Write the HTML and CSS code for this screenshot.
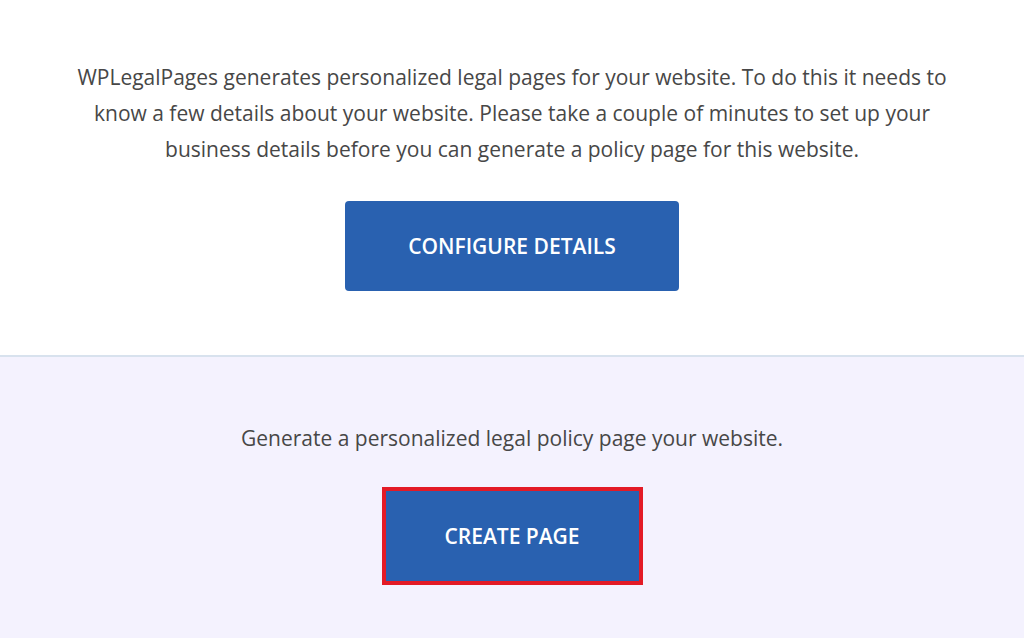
FILE: index.html
```html
<!DOCTYPE html>
<html lang="en">
<head>
	<meta charset="UTF-8">
	<title>WPLegalPages</title>
<link rel="stylesheet" href="styles.css">
</head>
<body>
<div class="setup">
  <p class="intro">WPLegalPages generates personalized legal pages for your website. To do this it needs to know a few details about your website. Please take a couple of minutes to set up your business details before you can generate a policy page for this website.</p>
  <a class="btn btn-configure" href="#">CONFIGURE DETAILS</a>
</div>
<div class="create">
  <p class="intro">Generate a personalized legal policy page your website.</p>
  <div class="highlight">
    <a class="btn btn-create" href="#">CREATE PAGE</a>
  </div>
</div>
</body>
</html>
```

FILE: styles.css
```css
html,body{margin:0;padding:0;}
body{
font-family:"Open Sans","Noto Sans",sans-serif;
color:#474747;
background:#f4f2fe;
}
.setup{
background:#ffffff;
padding:59px 0 64px;
display:flex;flex-direction:column;align-items:center;
border-bottom:2px solid #d8e2ee;
}
.intro{
margin:0;
font-size:21px;
line-height:36px;
text-align:center;
}
.setup>.intro{width:890px;}
.btn{
display:flex;align-items:center;justify-content:center;
background:#2961b0;
color:#ffffff;
font-weight:600;
font-size:21px;
text-decoration:none;
height:90px;
border-radius:4px;
}
.btn-configure{width:334px;margin-top:34px;}
.create{
padding:63px 0 53px;
display:flex;flex-direction:column;align-items:center;
}
.highlight{
margin-top:31px;
border:4px solid #e31b26;
}
.btn-create{width:253px;border-radius:0;}
```
